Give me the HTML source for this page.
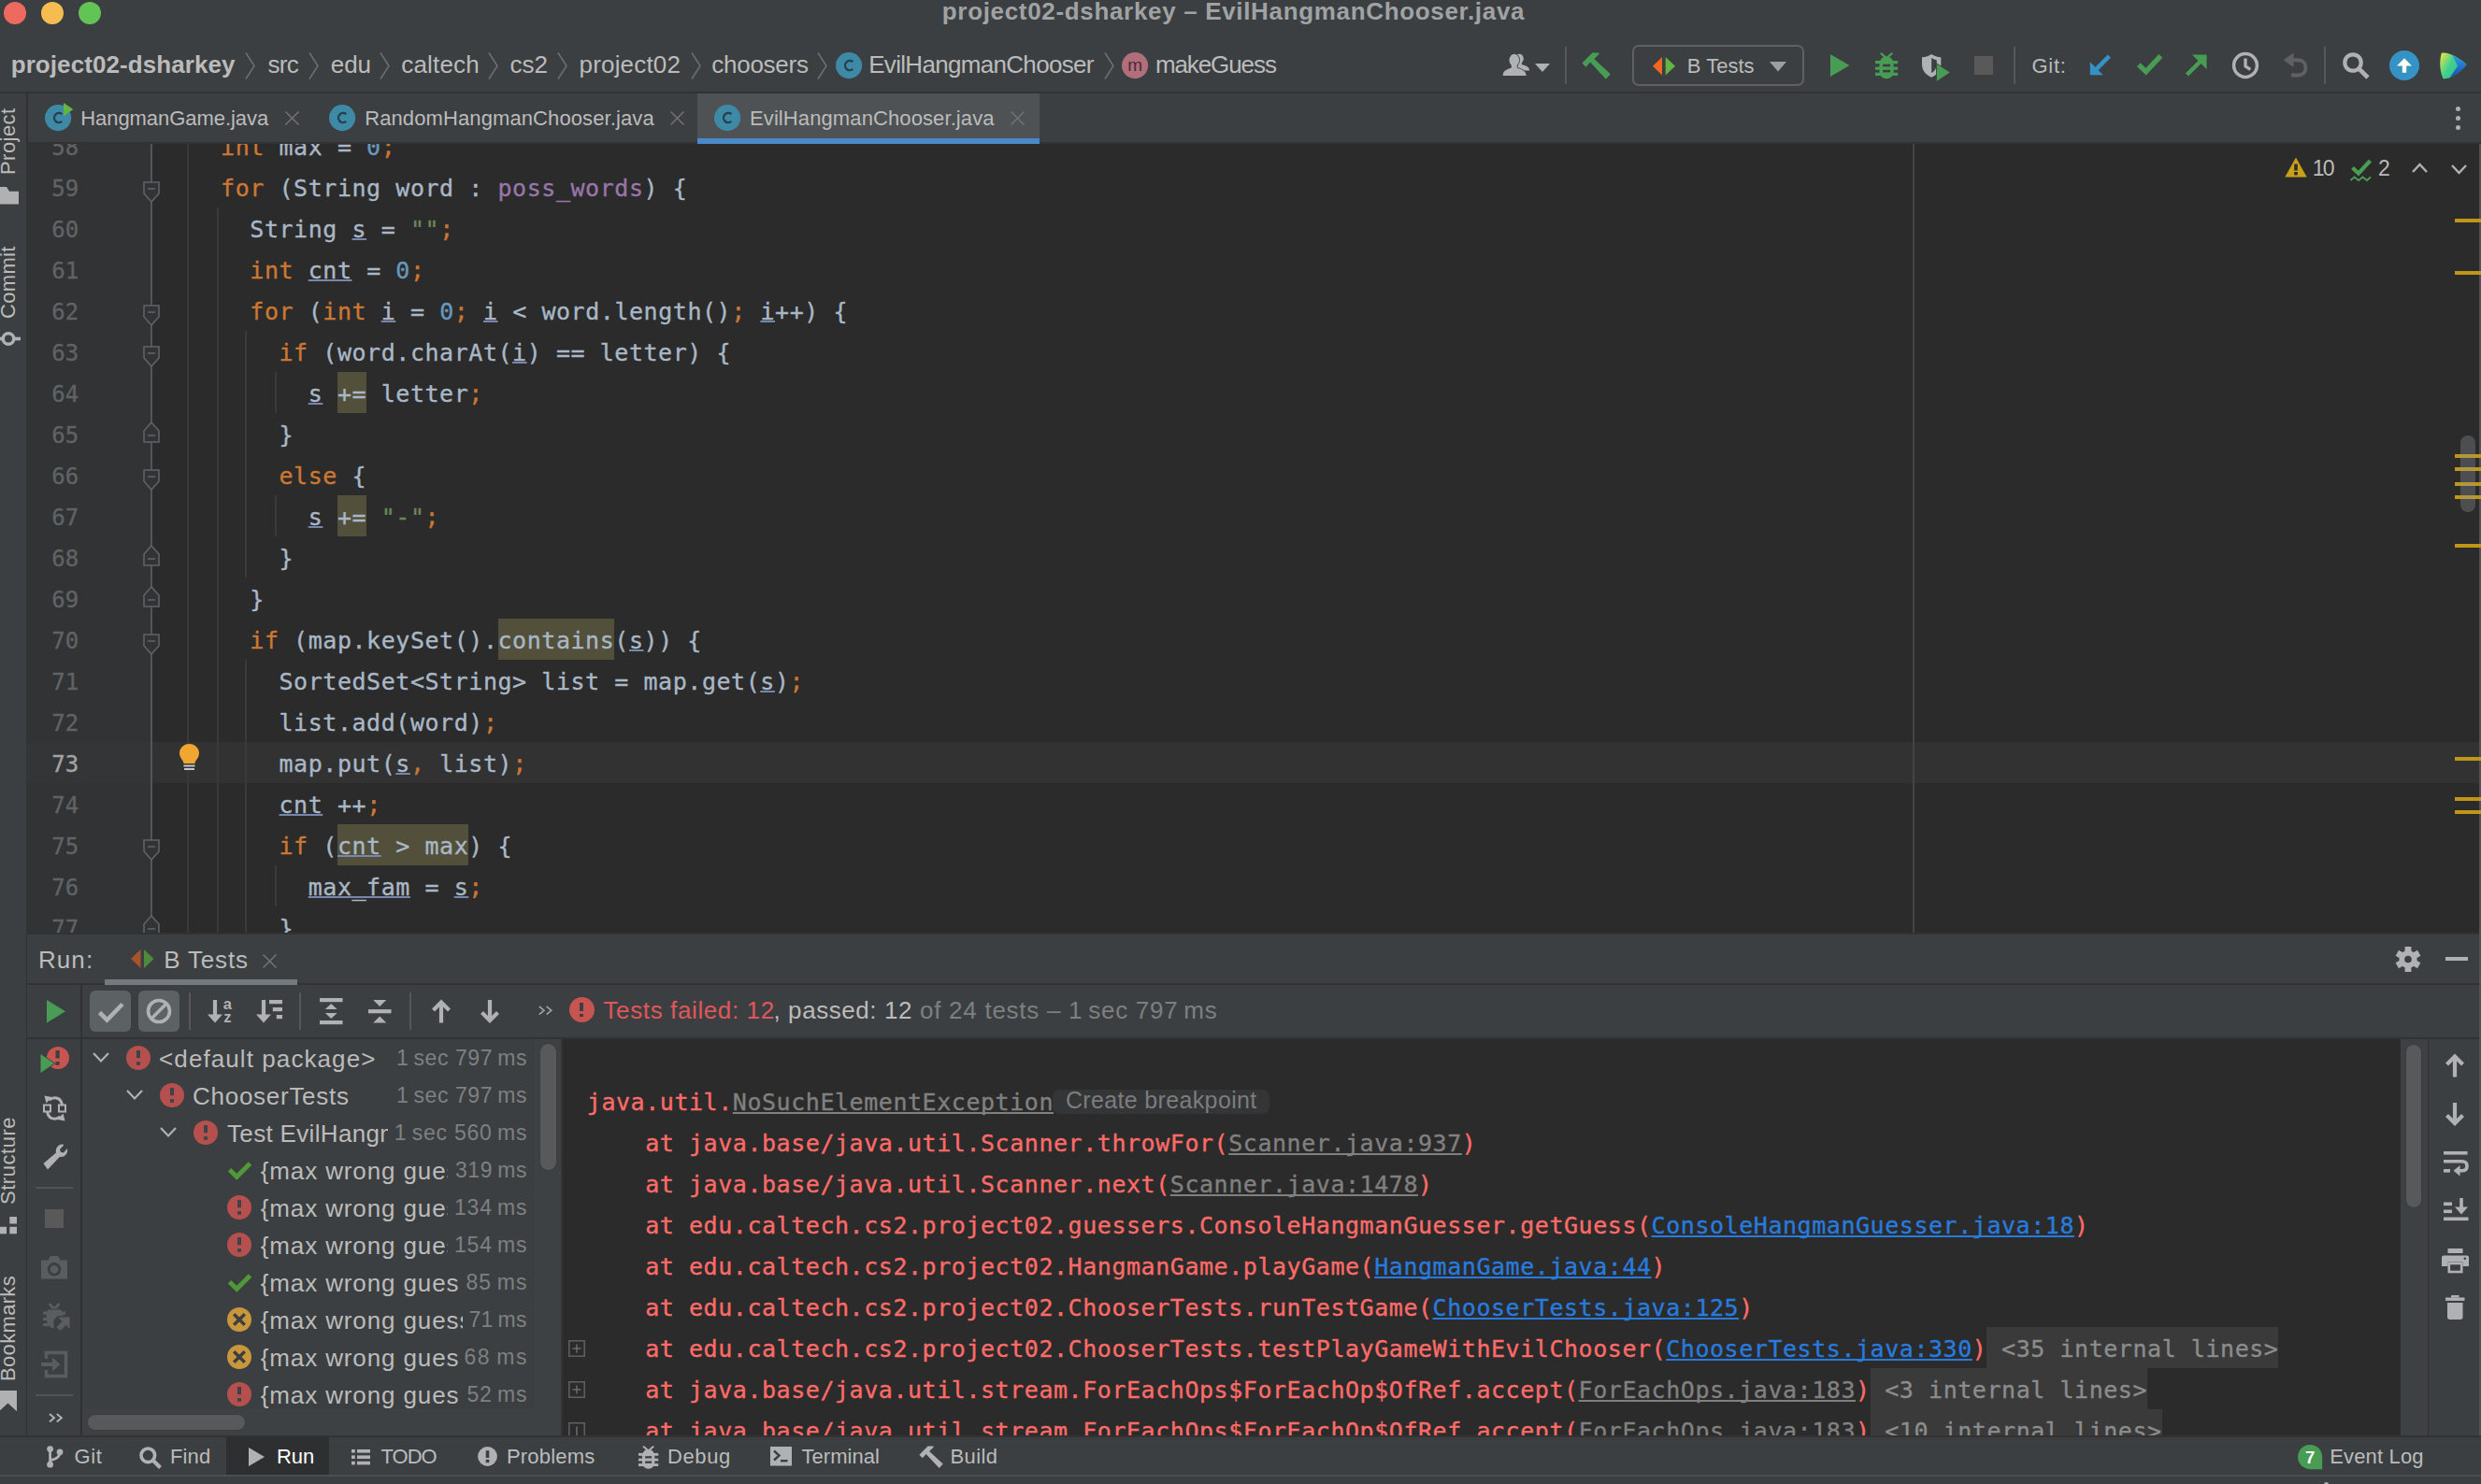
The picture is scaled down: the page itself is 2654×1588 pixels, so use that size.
<!DOCTYPE html>
<html lang="en"><head><meta charset="utf-8"><title>project02-dsharkey – EvilHangmanChooser.java</title>
<style>
html,body{margin:0;padding:0;background:#3c3f41;}
body{width:2654px;height:1588px;overflow:hidden;}
#app{position:relative;width:2654px;height:1588px;overflow:hidden;background:#3c3f41;font-family:'Liberation Sans',Arial,sans-serif;}
#app div,#app span,#app svg,#app pre{position:absolute;white-space:pre;}
#app svg{overflow:visible;}
#app pre{margin:0;}
#app pre span, #app pre b, #app pre i, #app pre u, #app span span{position:static;font:inherit;}
.code{font:25px/44px 'DejaVu Sans Mono','Liberation Mono',monospace;letter-spacing:0.549px;color:#a9b7c6;-webkit-text-stroke:0.35px;}
.k{color:#cc7832}.s{color:#6a8759}.n{color:#6897bb}.f{color:#9876aa}
.u{text-decoration:underline;text-decoration-color:#7687ab;text-decoration-thickness:2px;text-underline-offset:1.2px;text-decoration-skip-ink:none;}
.h{background:#52503a;padding:9px 0 6px 0}
.ln{font:24px/44px 'DejaVu Sans Mono','Liberation Mono',monospace;letter-spacing:0px;color:#606366;text-align:right;-webkit-text-stroke:0.35px;}
.r{color:#ff6b68}.g{color:#808080}.l{color:#287bde}
.ul{text-decoration:underline;text-decoration-thickness:2px;text-underline-offset:2px;text-decoration-skip-ink:none;}
.fold{background:#3a3a3a;color:#8c8c8c;padding:9px 0 6px 0}

</style></head><body>
<div id="app">
<div style="left:28px;top:154px;width:2626px;height:844px;background:#2b2b2b;"></div>
<div style="left:28px;top:154px;width:134px;height:844px;background:#313335;"></div>
<div style="left:162px;top:794px;width:2492px;height:44px;background:#323232;"></div>
<div style="left:28px;top:794px;width:134px;height:44px;background:#333537;"></div>
<div style="left:2046px;top:154px;width:1.5px;height:844px;background:#424445;"></div>
<div style="left:161.3px;top:154px;width:2px;height:844px;background:#535557;"></div>
<div style="left:200.0px;top:154px;width:2px;height:844px;background:#3a3a3a;"></div>
<div style="left:232.0px;top:222px;width:2px;height:776px;background:#3a3a3a;"></div>
<div style="left:262.0px;top:354px;width:2px;height:264px;background:#3a3a3a;"></div>
<div style="left:262.0px;top:706px;width:2px;height:292px;background:#3a3a3a;"></div>
<div style="left:294.0px;top:398px;width:2px;height:44px;background:#3a3a3a;"></div>
<div style="left:294.0px;top:530px;width:2px;height:44px;background:#3a3a3a;"></div>
<div style="left:294.0px;top:926px;width:2px;height:44px;background:#3a3a3a;"></div>
<pre class="code" style="left:236.1px;top:135.5px;height:44px"><span class="k">int</span> max = <span class="n">0</span><span class="k">;</span></pre>
<pre class="ln" style="left:30px;top:136.0px;width:54.2px;color:#606366">58</pre>
<pre class="code" style="left:236.1px;top:179.5px;height:44px"><span class="k">for</span> (String word : <span class="f">poss_words</span>) {</pre>
<pre class="ln" style="left:30px;top:180.0px;width:54.2px;color:#606366">59</pre>
<pre class="code" style="left:267.3px;top:223.5px;height:44px">String <span class="u">s</span> = <span class="s">""</span><span class="k">;</span></pre>
<pre class="ln" style="left:30px;top:224.0px;width:54.2px;color:#606366">60</pre>
<pre class="code" style="left:267.3px;top:267.5px;height:44px"><span class="k">int</span> <span class="u">cnt</span> = <span class="n">0</span><span class="k">;</span></pre>
<pre class="ln" style="left:30px;top:268.0px;width:54.2px;color:#606366">61</pre>
<pre class="code" style="left:267.3px;top:311.5px;height:44px"><span class="k">for</span> (<span class="k">int</span> <span class="u">i</span> = <span class="n">0</span><span class="k">;</span> <span class="u">i</span> &lt; word.length()<span class="k">;</span> <span class="u">i</span>++) {</pre>
<pre class="ln" style="left:30px;top:312.0px;width:54.2px;color:#606366">62</pre>
<pre class="code" style="left:298.5px;top:355.5px;height:44px"><span class="k">if</span> (word.charAt(<span class="u">i</span>) == letter) {</pre>
<pre class="ln" style="left:30px;top:356.0px;width:54.2px;color:#606366">63</pre>
<pre class="code" style="left:329.7px;top:399.5px;height:44px"><span class="u">s</span> <span class="h">+=</span> letter<span class="k">;</span></pre>
<pre class="ln" style="left:30px;top:400.0px;width:54.2px;color:#606366">64</pre>
<pre class="code" style="left:298.5px;top:443.5px;height:44px">}</pre>
<pre class="ln" style="left:30px;top:444.0px;width:54.2px;color:#606366">65</pre>
<pre class="code" style="left:298.5px;top:487.5px;height:44px"><span class="k">else</span> {</pre>
<pre class="ln" style="left:30px;top:488.0px;width:54.2px;color:#606366">66</pre>
<pre class="code" style="left:329.7px;top:531.5px;height:44px"><span class="u">s</span> <span class="h">+=</span> <span class="s">"-"</span><span class="k">;</span></pre>
<pre class="ln" style="left:30px;top:532.0px;width:54.2px;color:#606366">67</pre>
<pre class="code" style="left:298.5px;top:575.5px;height:44px">}</pre>
<pre class="ln" style="left:30px;top:576.0px;width:54.2px;color:#606366">68</pre>
<pre class="code" style="left:267.3px;top:619.5px;height:44px">}</pre>
<pre class="ln" style="left:30px;top:620.0px;width:54.2px;color:#606366">69</pre>
<pre class="code" style="left:267.3px;top:663.5px;height:44px"><span class="k">if</span> (map.keySet().<span class="h">contains</span>(<span class="u">s</span>)) {</pre>
<pre class="ln" style="left:30px;top:664.0px;width:54.2px;color:#606366">70</pre>
<pre class="code" style="left:298.5px;top:707.5px;height:44px">SortedSet&lt;String&gt; list = map.get(<span class="u">s</span>)<span class="k">;</span></pre>
<pre class="ln" style="left:30px;top:708.0px;width:54.2px;color:#606366">71</pre>
<pre class="code" style="left:298.5px;top:751.5px;height:44px">list.add(word)<span class="k">;</span></pre>
<pre class="ln" style="left:30px;top:752.0px;width:54.2px;color:#606366">72</pre>
<pre class="code" style="left:298.5px;top:795.5px;height:44px">map.put(<span class="u">s</span><span class="k">,</span> list)<span class="k">;</span></pre>
<pre class="ln" style="left:30px;top:796.0px;width:54.2px;color:#a4a3a3">73</pre>
<pre class="code" style="left:298.5px;top:839.5px;height:44px"><span class="u">cnt</span> ++<span class="k">;</span></pre>
<pre class="ln" style="left:30px;top:840.0px;width:54.2px;color:#606366">74</pre>
<pre class="code" style="left:298.5px;top:883.5px;height:44px"><span class="k">if</span> (<span class="h"><span class="u">cnt</span> &gt; max</span>) {</pre>
<pre class="ln" style="left:30px;top:884.0px;width:54.2px;color:#606366">75</pre>
<pre class="code" style="left:329.7px;top:927.5px;height:44px"><span class="u">max_fam</span> = <span class="u">s</span><span class="k">;</span></pre>
<pre class="ln" style="left:30px;top:928.0px;width:54.2px;color:#606366">76</pre>
<pre class="code" style="left:298.5px;top:971.5px;height:44px">}</pre>
<pre class="ln" style="left:30px;top:972.0px;width:54.2px;color:#606366">77</pre>
<svg style="left:153px;top:193.5px;" width="18" height="23" viewBox="0 0 18 23"><path d="M1 1 H17 V13 L9 22 L1 13 Z" fill="#313335" stroke="#606366" stroke-width="1.6"/><path d="M5 8 H13" stroke="#606366" stroke-width="1.6"/></svg>
<svg style="left:153px;top:325.5px;" width="18" height="23" viewBox="0 0 18 23"><path d="M1 1 H17 V13 L9 22 L1 13 Z" fill="#313335" stroke="#606366" stroke-width="1.6"/><path d="M5 8 H13" stroke="#606366" stroke-width="1.6"/></svg>
<svg style="left:153px;top:369.5px;" width="18" height="23" viewBox="0 0 18 23"><path d="M1 1 H17 V13 L9 22 L1 13 Z" fill="#313335" stroke="#606366" stroke-width="1.6"/><path d="M5 8 H13" stroke="#606366" stroke-width="1.6"/></svg>
<svg style="left:153px;top:451.3px;" width="18" height="23" viewBox="0 0 18 23"><path d="M1 22 H17 V10 L9 1 L1 10 Z" fill="#313335" stroke="#606366" stroke-width="1.6"/><path d="M5 15 H13" stroke="#606366" stroke-width="1.6"/></svg>
<svg style="left:153px;top:501.5px;" width="18" height="23" viewBox="0 0 18 23"><path d="M1 1 H17 V13 L9 22 L1 13 Z" fill="#313335" stroke="#606366" stroke-width="1.6"/><path d="M5 8 H13" stroke="#606366" stroke-width="1.6"/></svg>
<svg style="left:153px;top:583.3px;" width="18" height="23" viewBox="0 0 18 23"><path d="M1 22 H17 V10 L9 1 L1 10 Z" fill="#313335" stroke="#606366" stroke-width="1.6"/><path d="M5 15 H13" stroke="#606366" stroke-width="1.6"/></svg>
<svg style="left:153px;top:627.3px;" width="18" height="23" viewBox="0 0 18 23"><path d="M1 22 H17 V10 L9 1 L1 10 Z" fill="#313335" stroke="#606366" stroke-width="1.6"/><path d="M5 15 H13" stroke="#606366" stroke-width="1.6"/></svg>
<svg style="left:153px;top:677.5px;" width="18" height="23" viewBox="0 0 18 23"><path d="M1 1 H17 V13 L9 22 L1 13 Z" fill="#313335" stroke="#606366" stroke-width="1.6"/><path d="M5 8 H13" stroke="#606366" stroke-width="1.6"/></svg>
<svg style="left:153px;top:897.5px;" width="18" height="23" viewBox="0 0 18 23"><path d="M1 1 H17 V13 L9 22 L1 13 Z" fill="#313335" stroke="#606366" stroke-width="1.6"/><path d="M5 8 H13" stroke="#606366" stroke-width="1.6"/></svg>
<svg style="left:153px;top:979.3px;" width="18" height="23" viewBox="0 0 18 23"><path d="M1 22 H17 V10 L9 1 L1 10 Z" fill="#313335" stroke="#606366" stroke-width="1.6"/><path d="M5 15 H13" stroke="#606366" stroke-width="1.6"/></svg>
<div style="left:0px;top:0px;width:2654px;height:98px;background:#3c3f41;"></div>
<div style="left:0px;top:98px;width:2654px;height:2px;background:#323232;"></div>
<div style="left:0px;top:100px;width:2654px;height:52px;background:#3c3f41;"></div>
<div style="left:0px;top:152px;width:2654px;height:2px;background:#323232;"></div>
<div style="left:0px;top:100px;width:28px;height:1488px;background:#3c3f41;"></div>
<div style="left:28px;top:998px;width:2px;height:539px;background:#2f3133;"></div>
<div style="left:28px;top:100px;width:2px;height:52px;background:#2f3133;"></div>
<div style="left:4px;top:1.5px;width:24px;height:24px;border-radius:50%;background:#ee6a5f"></div>
<div style="left:44px;top:1.5px;width:24px;height:24px;border-radius:50%;background:#f5bd4f"></div>
<div style="left:84px;top:1.5px;width:24px;height:24px;border-radius:50%;background:#61c454"></div>
<span style="left:1007.80px;top:-2.60px;font:700 26px/30px 'Liberation Sans', Arial, sans-serif;color:#a0a2a3;letter-spacing:0.669px;">project02-dsharkey – EvilHangmanChooser.java</span>
<span style="left:11.70px;top:53.50px;font:700 26px/30px 'Liberation Sans', Arial, sans-serif;color:#bbbbbb;letter-spacing:0.077px;">project02-dsharkey</span>
<span style="left:286.40px;top:53.50px;font:400 26px/30px 'Liberation Sans', Arial, sans-serif;color:#bbbbbb;letter-spacing:-0.679px;">src</span>
<span style="left:353.70px;top:53.50px;font:400 26px/30px 'Liberation Sans', Arial, sans-serif;color:#bbbbbb;letter-spacing:-0.010px;">edu</span>
<span style="left:429.30px;top:53.50px;font:400 26px/30px 'Liberation Sans', Arial, sans-serif;color:#bbbbbb;letter-spacing:0.180px;">caltech</span>
<span style="left:545.60px;top:53.50px;font:400 26px/30px 'Liberation Sans', Arial, sans-serif;color:#bbbbbb;letter-spacing:-0.050px;">cs2</span>
<span style="left:619.60px;top:53.50px;font:400 26px/30px 'Liberation Sans', Arial, sans-serif;color:#bbbbbb;letter-spacing:0.163px;">project02</span>
<span style="left:761.20px;top:53.50px;font:400 26px/30px 'Liberation Sans', Arial, sans-serif;color:#bbbbbb;letter-spacing:-0.243px;">choosers</span>
<span style="left:929.20px;top:53.50px;font:400 26px/30px 'Liberation Sans', Arial, sans-serif;color:#bbbbbb;letter-spacing:-0.685px;">EvilHangmanChooser</span>
<span style="left:1235.90px;top:53.50px;font:400 26px/30px 'Liberation Sans', Arial, sans-serif;color:#bbbbbb;letter-spacing:-1.090px;">makeGuess</span>
<svg style="left:262px;top:56px;" width="11" height="29" viewBox="0 0 11 29"><path d="M1 0.5 L10 14.5 L1 28.5" fill="none" stroke="#6b6e70" stroke-width="1.6"/></svg>
<svg style="left:330px;top:56px;" width="11" height="29" viewBox="0 0 11 29"><path d="M1 0.5 L10 14.5 L1 28.5" fill="none" stroke="#6b6e70" stroke-width="1.6"/></svg>
<svg style="left:406px;top:56px;" width="11" height="29" viewBox="0 0 11 29"><path d="M1 0.5 L10 14.5 L1 28.5" fill="none" stroke="#6b6e70" stroke-width="1.6"/></svg>
<svg style="left:522px;top:56px;" width="11" height="29" viewBox="0 0 11 29"><path d="M1 0.5 L10 14.5 L1 28.5" fill="none" stroke="#6b6e70" stroke-width="1.6"/></svg>
<svg style="left:596px;top:56px;" width="11" height="29" viewBox="0 0 11 29"><path d="M1 0.5 L10 14.5 L1 28.5" fill="none" stroke="#6b6e70" stroke-width="1.6"/></svg>
<svg style="left:738.5px;top:56px;" width="11" height="29" viewBox="0 0 11 29"><path d="M1 0.5 L10 14.5 L1 28.5" fill="none" stroke="#6b6e70" stroke-width="1.6"/></svg>
<svg style="left:874px;top:56px;" width="11" height="29" viewBox="0 0 11 29"><path d="M1 0.5 L10 14.5 L1 28.5" fill="none" stroke="#6b6e70" stroke-width="1.6"/></svg>
<svg style="left:1180.5px;top:56px;" width="11" height="29" viewBox="0 0 11 29"><path d="M1 0.5 L10 14.5 L1 28.5" fill="none" stroke="#6b6e70" stroke-width="1.6"/></svg>
<svg style="left:893.9px;top:55.800000000000004px;" width="28.2" height="28.2" viewBox="0 0 28.2 28.2"><circle cx="14.1" cy="14.1" r="14.1" fill="#3e89a5"/><path d="M18.40 10.20 A5.1 5.1 0 1 0 18.40 18.00" fill="none" stroke="#25414d" stroke-width="2.3"/></svg>
<svg style="left:1199.9px;top:55.85px;" width="28.2" height="28.2" viewBox="0 0 28.2 28.2"><circle cx="14.1" cy="14.1" r="14.1" fill="#b16e7b"/><text x="14.1" y="20.2" text-anchor="middle" font-family="Liberation Sans, Arial, sans-serif" font-size="19" fill="#4a2a32">m</text></svg>
<div style="left:745.8px;top:100px;width:366.2px;height:48px;background:#4e5254;"></div>
<div style="left:745.8px;top:147.5px;width:366.2px;height:6px;background:#4a88c7;"></div>
<svg style="left:47.9px;top:111.80000000000001px;" width="28.2" height="28.2" viewBox="0 0 28.2 28.2"><circle cx="14.1" cy="14.1" r="14.1" fill="#3e89a5"/><path d="M18.40 10.20 A5.1 5.1 0 1 0 18.40 18.00" fill="none" stroke="#25414d" stroke-width="2.3"/></svg>
<svg style="left:67.8px;top:109.9px;" width="10.4" height="14.2" viewBox="0 0 10.4 14.2"><path d="M0 0 L10.4 7.1 L0 14.2 Z" fill="#62b543"/></svg>
<span style="left:86.20px;top:113.70px;font:400 22px/25px 'Liberation Sans', Arial, sans-serif;color:#bbbbbb;letter-spacing:-0.049px;">HangmanGame.java</span>
<svg style="left:351.7px;top:111.80000000000001px;" width="28.2" height="28.2" viewBox="0 0 28.2 28.2"><circle cx="14.1" cy="14.1" r="14.1" fill="#3e89a5"/><path d="M18.40 10.20 A5.1 5.1 0 1 0 18.40 18.00" fill="none" stroke="#25414d" stroke-width="2.3"/></svg>
<span style="left:390.20px;top:113.70px;font:400 22px/25px 'Liberation Sans', Arial, sans-serif;color:#bbbbbb;letter-spacing:0.103px;">RandomHangmanChooser.java</span>
<svg style="left:764.1px;top:111.80000000000001px;" width="28.2" height="28.2" viewBox="0 0 28.2 28.2"><circle cx="14.1" cy="14.1" r="14.1" fill="#3e89a5"/><path d="M18.40 10.20 A5.1 5.1 0 1 0 18.40 18.00" fill="none" stroke="#25414d" stroke-width="2.3"/></svg>
<span style="left:802.00px;top:113.70px;font:400 22px/25px 'Liberation Sans', Arial, sans-serif;color:#bbbbbb;letter-spacing:0.104px;">EvilHangmanChooser.java</span>
<svg style="left:304.9px;top:118.7px;" width="15" height="15" viewBox="0 0 15 15"><path d="M0.5 0.5 L14.5 14.5 M14.5 0.5 L0.5 14.5" stroke="#6e7073" stroke-width="1.7" fill="none"/></svg>
<svg style="left:716.8px;top:118.7px;" width="15" height="15" viewBox="0 0 15 15"><path d="M0.5 0.5 L14.5 14.5 M14.5 0.5 L0.5 14.5" stroke="#6e7073" stroke-width="1.7" fill="none"/></svg>
<svg style="left:1080.8px;top:118.7px;" width="15" height="15" viewBox="0 0 15 15"><path d="M0.5 0.5 L14.5 14.5 M14.5 0.5 L0.5 14.5" stroke="#6e7073" stroke-width="1.7" fill="none"/></svg>
<div style="left:2627px;top:113.5px;width:5px;height:5px;border-radius:50%;background:#afb1b3"></div>
<div style="left:2627px;top:123.8px;width:5px;height:5px;border-radius:50%;background:#afb1b3"></div>
<div style="left:2627px;top:134.1px;width:5px;height:5px;border-radius:50%;background:#afb1b3"></div>
<div style="left:29px;top:998px;width:2625px;height:2px;background:#323232;"></div>
<div style="left:29px;top:1000px;width:2625px;height:537px;background:#3c3f41;"></div>
<div style="left:29px;top:1052px;width:2625px;height:2px;background:#323232;"></div>
<div style="left:29px;top:1110px;width:2625px;height:2px;background:#323232;"></div>
<div style="left:86px;top:1054px;width:2px;height:483px;background:#2f3133;"></div>
<div style="left:602px;top:1112px;width:1966px;height:424px;background:#2b2b2b;"></div>
<div style="left:600px;top:1112px;width:2px;height:424px;background:#313335;"></div>
<div style="left:2568px;top:1112px;width:29px;height:424px;background:#3e4143;"></div>
<div style="left:2596.5px;top:1112px;width:1.5px;height:424px;background:#323232;"></div>
<div style="left:2573px;top:1116.5px;width:18px;height:176.5px;border-radius:9px;background:#58595b;border:1.3px solid #3a3c3e;box-sizing:border-box"></div>
<div style="left:572px;top:1112px;width:28px;height:396px;background:#3e4143;"></div>
<div style="left:88px;top:1508px;width:512px;height:28px;background:#3e4143;"></div>
<div style="left:576.5px;top:1116px;width:19px;height:137px;border-radius:9.5px;background:#58595b;border:1.3px solid #3a3c3e;box-sizing:border-box"></div>
<div style="left:93px;top:1513.3px;width:170px;height:17.5px;border-radius:9px;background:#58595b;border:1.3px solid #3a3c3e;box-sizing:border-box"></div>
<div style="left:0px;top:1536px;width:2654px;height:1.5px;background:#323232;"></div>
<div style="left:0px;top:1537.5px;width:2654px;height:50.5px;background:#3c3f41;"></div>
<div style="left:0px;top:1578px;width:2654px;height:1.5px;background:#4b4e50;"></div>
<div style="left:2652px;top:154px;width:2px;height:1382px;background:#4f5254;"></div>
<span style="left:41.00px;top:1012.00px;font:400 26px/30px 'Liberation Sans', Arial, sans-serif;color:#bbbbbb;letter-spacing:1.068px;">Run:</span>
<span style="left:175.20px;top:1012.00px;font:400 26px/30px 'Liberation Sans', Arial, sans-serif;color:#bbbbbb;letter-spacing:0.842px;">B Tests</span>
<svg style="left:140px;top:1016px;" width="25" height="20" viewBox="0 0 25 20"><path d="M10.5 0 V20 L0 10 Z" fill="#a8532d"/><path d="M14 0 V20 L24.5 10 Z" fill="#4d8a3c"/></svg>
<svg style="left:280.5px;top:1021px;" width="15" height="15" viewBox="0 0 15 15"><path d="M0.5 0.5 L14.5 14.5 M14.5 0.5 L0.5 14.5" stroke="#6e7073" stroke-width="1.7" fill="none"/></svg>
<div style="left:112px;top:1048px;width:206px;height:5.5px;background:#747a80;"></div>
<div style="left:608.5px;top:1066.8px;width:27px;height:27px;border-radius:50%;background:#c75450"></div>
<div style="left:620.3px;top:1072.5px;width:3.4px;height:9px;background:#3c3f41;"></div>
<div style="left:620.3px;top:1084.5px;width:3.4px;height:3.6px;background:#3c3f41;"></div>
<span style="left:645.50px;top:1066.00px;font:400 26px/30px 'Liberation Sans', Arial, sans-serif;color:#e0575a;letter-spacing:0.615px;">Tests failed: 12</span>
<span style="left:827.50px;top:1066.00px;font:400 26px/30px 'Liberation Sans', Arial, sans-serif;color:#bbbbbb;letter-spacing:0.573px;">, passed: 12</span>
<span style="left:984.00px;top:1066.00px;font:400 26px/30px 'Liberation Sans', Arial, sans-serif;color:#7d7f80;letter-spacing:0.730px;">of 24 tests – 1 sec 797 ms</span>
<svg style="left:98.6px;top:1126px;" width="18" height="11" viewBox="0 0 18 11"><path d="M1 1 L9 9.5 L17 1" fill="none" stroke="#afb1b3" stroke-width="2.2"/></svg>
<svg style="left:135.2px;top:1119px;" width="26" height="26" viewBox="0 0 26 26"><circle cx="13" cy="13" r="13" fill="#b5504f"/><rect x="11" y="5" width="4" height="8.2" fill="#3c4448"/><rect x="11" y="17.1" width="4" height="3.7" fill="#3c4448"/></svg>
<span style="left:170.10px;top:1118.30px;font:400 26px/30px 'Liberation Sans', Arial, sans-serif;color:#bbbbbb;letter-spacing:1.083px;">&lt;default package&gt;</span>
<span style="left:424.00px;top:1119.40px;font:400 23px/26px 'Liberation Sans', Arial, sans-serif;color:#7e8081;letter-spacing:0.571px;">1 sec 797 ms</span>
<svg style="left:134.6px;top:1166px;" width="18" height="11" viewBox="0 0 18 11"><path d="M1 1 L9 9.5 L17 1" fill="none" stroke="#afb1b3" stroke-width="2.2"/></svg>
<svg style="left:171.2px;top:1159px;" width="26" height="26" viewBox="0 0 26 26"><circle cx="13" cy="13" r="13" fill="#b5504f"/><rect x="11" y="5" width="4" height="8.2" fill="#3c4448"/><rect x="11" y="17.1" width="4" height="3.7" fill="#3c4448"/></svg>
<span style="left:206.00px;top:1158.30px;font:400 26px/30px 'Liberation Sans', Arial, sans-serif;color:#bbbbbb;letter-spacing:0.731px;">ChooserTests</span>
<span style="left:424.00px;top:1159.40px;font:400 23px/26px 'Liberation Sans', Arial, sans-serif;color:#7e8081;letter-spacing:0.571px;">1 sec 797 ms</span>
<svg style="left:170.6px;top:1206px;" width="18" height="11" viewBox="0 0 18 11"><path d="M1 1 L9 9.5 L17 1" fill="none" stroke="#afb1b3" stroke-width="2.2"/></svg>
<svg style="left:207.2px;top:1199px;" width="26" height="26" viewBox="0 0 26 26"><circle cx="13" cy="13" r="13" fill="#b5504f"/><rect x="11" y="5" width="4" height="8.2" fill="#3c4448"/><rect x="11" y="17.1" width="4" height="3.7" fill="#3c4448"/></svg>
<span style="left:243.00px;top:1198.30px;font:400 26px/30px 'Liberation Sans', Arial, sans-serif;color:#bbbbbb;letter-spacing:0.333px;width:172.20px;overflow:hidden;">Test EvilHangman</span>
<span style="left:421.70px;top:1199.40px;font:400 23px/26px 'Liberation Sans', Arial, sans-serif;color:#7e8081;letter-spacing:0.780px;">1 sec 560 ms</span>
<svg style="left:243.7px;top:1242.5px;" width="25" height="19" viewBox="0 0 25 19"><path d="M1.500 8.800 L9.300 16.200 L23.500 2" fill="none" stroke="#4f9a36" stroke-width="5"/></svg>
<span style="left:278.70px;top:1238.30px;font:400 26px/30px 'Liberation Sans', Arial, sans-serif;color:#bbbbbb;letter-spacing:0.883px;width:200.80px;overflow:hidden;">{max wrong guesses</span>
<span style="left:487.00px;top:1239.40px;font:400 23px/26px 'Liberation Sans', Arial, sans-serif;color:#7e8081;letter-spacing:0.572px;">319 ms</span>
<svg style="left:243.2px;top:1279px;" width="26" height="26" viewBox="0 0 26 26"><circle cx="13" cy="13" r="13" fill="#b5504f"/><rect x="11" y="5" width="4" height="8.2" fill="#3c4448"/><rect x="11" y="17.1" width="4" height="3.7" fill="#3c4448"/></svg>
<span style="left:278.70px;top:1278.30px;font:400 26px/30px 'Liberation Sans', Arial, sans-serif;color:#bbbbbb;letter-spacing:0.883px;width:200.80px;overflow:hidden;">{max wrong guesses</span>
<span style="left:486.00px;top:1279.40px;font:400 23px/26px 'Liberation Sans', Arial, sans-serif;color:#7e8081;letter-spacing:0.772px;">134 ms</span>
<svg style="left:243.2px;top:1319px;" width="26" height="26" viewBox="0 0 26 26"><circle cx="13" cy="13" r="13" fill="#b5504f"/><rect x="11" y="5" width="4" height="8.2" fill="#3c4448"/><rect x="11" y="17.1" width="4" height="3.7" fill="#3c4448"/></svg>
<span style="left:278.70px;top:1318.30px;font:400 26px/30px 'Liberation Sans', Arial, sans-serif;color:#bbbbbb;letter-spacing:0.883px;width:200.80px;overflow:hidden;">{max wrong guesses</span>
<span style="left:486.00px;top:1319.40px;font:400 23px/26px 'Liberation Sans', Arial, sans-serif;color:#7e8081;letter-spacing:0.772px;">154 ms</span>
<svg style="left:243.7px;top:1362.5px;" width="25" height="19" viewBox="0 0 25 19"><path d="M1.500 8.800 L9.300 16.200 L23.500 2" fill="none" stroke="#4f9a36" stroke-width="5"/></svg>
<span style="left:278.70px;top:1358.30px;font:400 26px/30px 'Liberation Sans', Arial, sans-serif;color:#bbbbbb;letter-spacing:0.883px;width:213.30px;overflow:hidden;">{max wrong guesses</span>
<span style="left:498.50px;top:1359.40px;font:400 23px/26px 'Liberation Sans', Arial, sans-serif;color:#7e8081;letter-spacing:1.038px;">85 ms</span>
<svg style="left:243.2px;top:1399px;" width="26" height="26" viewBox="0 0 26 26"><circle cx="13" cy="13" r="13" fill="#c8973c"/><path d="M7.2 7.2 L18.8 18.8 M18.8 7.2 L7.2 18.8" stroke="#3c3f41" stroke-width="3.4"/></svg>
<span style="left:278.70px;top:1398.30px;font:400 26px/30px 'Liberation Sans', Arial, sans-serif;color:#bbbbbb;letter-spacing:0.883px;width:216.30px;overflow:hidden;">{max wrong guesses</span>
<span style="left:501.50px;top:1399.40px;font:400 23px/26px 'Liberation Sans', Arial, sans-serif;color:#7e8081;letter-spacing:0.288px;">71 ms</span>
<svg style="left:243.2px;top:1439px;" width="26" height="26" viewBox="0 0 26 26"><circle cx="13" cy="13" r="13" fill="#c8973c"/><path d="M7.2 7.2 L18.8 18.8 M18.8 7.2 L7.2 18.8" stroke="#3c3f41" stroke-width="3.4"/></svg>
<span style="left:278.70px;top:1438.30px;font:400 26px/30px 'Liberation Sans', Arial, sans-serif;color:#bbbbbb;letter-spacing:0.883px;width:211.30px;overflow:hidden;">{max wrong guesses</span>
<span style="left:496.50px;top:1439.40px;font:400 23px/26px 'Liberation Sans', Arial, sans-serif;color:#7e8081;letter-spacing:1.538px;">68 ms</span>
<svg style="left:243.2px;top:1479px;" width="26" height="26" viewBox="0 0 26 26"><circle cx="13" cy="13" r="13" fill="#b5504f"/><rect x="11" y="5" width="4" height="8.2" fill="#3c4448"/><rect x="11" y="17.1" width="4" height="3.7" fill="#3c4448"/></svg>
<span style="left:278.70px;top:1478.30px;font:400 26px/30px 'Liberation Sans', Arial, sans-serif;color:#bbbbbb;letter-spacing:0.883px;width:213.30px;overflow:hidden;">{max wrong guesses</span>
<span style="left:499.50px;top:1479.40px;font:400 23px/26px 'Liberation Sans', Arial, sans-serif;color:#7e8081;letter-spacing:0.788px;">52 ms</span>
<div style="left:242px;top:1537.5px;width:110px;height:40.5px;background:#2d2f30;"></div>
<span style="left:79.50px;top:1545.70px;font:400 22px/25px 'Liberation Sans', Arial, sans-serif;color:#bbbbbb;letter-spacing:0.600px;">Git</span>
<span style="left:182.00px;top:1545.70px;font:400 22px/25px 'Liberation Sans', Arial, sans-serif;color:#bbbbbb;letter-spacing:0.146px;">Find</span>
<span style="left:296.00px;top:1545.70px;font:400 22px/25px 'Liberation Sans', Arial, sans-serif;color:#ffffff;letter-spacing:-0.062px;">Run</span>
<span style="left:407.50px;top:1545.70px;font:400 22px/25px 'Liberation Sans', Arial, sans-serif;color:#bbbbbb;letter-spacing:-1.014px;">TODO</span>
<span style="left:542.00px;top:1545.70px;font:400 22px/25px 'Liberation Sans', Arial, sans-serif;color:#bbbbbb;letter-spacing:0.183px;">Problems</span>
<span style="left:714.00px;top:1545.70px;font:400 22px/25px 'Liberation Sans', Arial, sans-serif;color:#bbbbbb;letter-spacing:0.602px;">Debug</span>
<span style="left:857.50px;top:1545.70px;font:400 22px/25px 'Liberation Sans', Arial, sans-serif;color:#bbbbbb;letter-spacing:0.036px;">Terminal</span>
<span style="left:1016.50px;top:1545.70px;font:400 22px/25px 'Liberation Sans', Arial, sans-serif;color:#bbbbbb;letter-spacing:0.379px;">Build</span>
<span style="left:2492.20px;top:1545.70px;font:400 22px/25px 'Liberation Sans', Arial, sans-serif;color:#bbbbbb;letter-spacing:0.158px;">Event Log</span>
<div style="left:600px;top:1112px;width:1968px;height:424px;overflow:hidden">
<pre class="code" style="left:27.8px;top:45.5px;height:44px"><span class="r">java.util.</span><span class="g ul">NoSuchElementException</span></pre>
<pre class="code" style="left:90.2px;top:89.5px;height:44px"><span class="r">at java.base/java.util.Scanner.throwFor(</span><span class="g ul">Scanner.java:937</span><span class="r">)</span></pre>
<pre class="code" style="left:90.2px;top:133.5px;height:44px"><span class="r">at java.base/java.util.Scanner.next(</span><span class="g ul">Scanner.java:1478</span><span class="r">)</span></pre>
<pre class="code" style="left:90.2px;top:177.5px;height:44px"><span class="r">at edu.caltech.cs2.project02.guessers.ConsoleHangmanGuesser.getGuess(</span><span class="l ul">ConsoleHangmanGuesser.java:18</span><span class="r">)</span></pre>
<pre class="code" style="left:90.2px;top:221.5px;height:44px"><span class="r">at edu.caltech.cs2.project02.HangmanGame.playGame(</span><span class="l ul">HangmanGame.java:44</span><span class="r">)</span></pre>
<pre class="code" style="left:90.2px;top:265.5px;height:44px"><span class="r">at edu.caltech.cs2.project02.ChooserTests.runTestGame(</span><span class="l ul">ChooserTests.java:125</span><span class="r">)</span></pre>
<pre class="code" style="left:90.2px;top:309.5px;height:44px"><span class="r">at edu.caltech.cs2.project02.ChooserTests.testPlayGameWithEvilChooser(</span><span class="l ul">ChooserTests.java:330</span><span class="r">)</span><span class="fold"> &lt;35 internal lines&gt;</span></pre>
<pre class="code" style="left:90.2px;top:353.5px;height:44px"><span class="r">at java.base/java.util.stream.ForEachOps$ForEachOp$OfRef.accept(</span><span class="g ul">ForEachOps.java:183</span><span class="r">)</span><span class="fold"> &lt;3 internal lines&gt;</span></pre>
<pre class="code" style="left:90.2px;top:397.5px;height:44px"><span class="r">at java.base/java.util.stream.ForEachOps$ForEachOp$OfRef.accept(</span><span class="g ul">ForEachOps.java:183</span><span class="r">)</span><span class="fold"> &lt;10 internal lines&gt;</span></pre>
</div>
<div style="left:1126px;top:1165.7px;width:232px;height:26.3px;border-radius:8px;background:#343536"></div>
<span style="left:1139.90px;top:1163.00px;font:400 25px/28px 'Liberation Sans', Arial, sans-serif;color:#7b7d7e;letter-spacing:0.351px;">Create breakpoint</span>
<svg style="left:1607px;top:57px;" width="30" height="25" viewBox="0 0 30 25"><g fill="#afb1b3" transform="translate(7.600,0.200) scale(0.840,0.760)"><ellipse cx="12.800" cy="7.300" rx="5.300" ry="6.500"/><path d="M0.700 24 C0.700 19 4.500 17.400 9.800 15.600 V11.500 H15.800 V15.600 C21.100 17.400 25.600 19 25.600 24 Z"/></g><g fill="#3c3f41" stroke="#3c3f41" stroke-width="1.600"><ellipse cx="12.800" cy="7.300" rx="5.300" ry="6.500"/><path d="M0.700 24 C0.700 19 4.500 17.400 9.800 15.600 V11.500 H15.800 V15.600 C21.100 17.400 25.600 19 25.600 24 Z"/></g><g fill="#afb1b3"><ellipse cx="12.800" cy="7.300" rx="5.300" ry="6.500"/><path d="M0.700 24 C0.700 19 4.500 17.400 9.800 15.600 V11.500 H15.800 V15.600 C21.100 17.400 25.600 19 25.600 24 Z"/></g></svg>
<svg style="left:1642px;top:67.5px;" width="16" height="9" viewBox="0 0 16 9"><path d="M0 0 H16 L8 9 Z" fill="#afb1b3"/></svg>
<div style="left:1674px;top:50px;width:1.5px;height:40px;background:#555759;"></div>
<svg style="left:1691.5px;top:55.5px;" width="31" height="29" viewBox="0 0 31 29"><path d="M11.400 0.600 H18.500 V2.100 L13.300 7.100 L30.700 23.200 L25.900 28.700 L9.100 10.600 L4.600 15.800 L0.400 11.600 Z" fill="#499c54"/></svg>
<div style="left:1746px;top:48px;width:184px;height:44px;border:2px solid #5e6062;border-radius:7px;box-sizing:border-box"></div>
<svg style="left:1768px;top:60.5px;" width="25" height="19.5" viewBox="0 0 25 19.5"><path d="M10 0 V19.5 L0 9.75 Z" fill="#f26522"/><path d="M13.7 0 V19.5 L24 9.75 Z" fill="#62b543"/></svg>
<span style="left:1804.70px;top:57.90px;font:400 22px/25px 'Liberation Sans', Arial, sans-serif;color:#bbbbbb;letter-spacing:0.028px;">B Tests</span>
<svg style="left:1893.3px;top:66px;" width="17.8" height="10.5" viewBox="0 0 17.8 10.5"><path d="M0 0 H18 L9 10.500 Z" fill="#9da0a3"/></svg>
<svg style="left:1957.5px;top:58px;" width="20.5" height="24" viewBox="0 0 20.5 24"><path d="M0 0 L20.500 12 L0 24 Z" fill="#499c54"/></svg>
<svg style="left:2005.9px;top:56px;" width="24.2" height="28.2" viewBox="0 0 24.2 28.2"><g fill="#499c54"><path d="M5 1.4 L6.700 0 L12.100 4.700 L17.500 0 L19.200 1.400 L13.600 6.600 H10.600 Z"/><path d="M12.100 4.600 C17 4.600 19.700 8.500 19.700 13.500 V20 C19.700 25 16.600 28.200 12.100 28.200 C7.600 28.200 4.500 25 4.500 20 V13.500 C4.500 8.500 7.200 4.600 12.100 4.600 Z"/><rect x="0" y="9" width="24.200" height="3.200"/><rect x="0" y="15.600" width="24.200" height="3.100"/><rect x="0" y="21.700" width="24.200" height="3.300"/></g><rect x="8.100" y="12.700" width="8" height="2.600" fill="#3c3f41"/><rect x="8.100" y="18.800" width="8" height="2.600" fill="#3c3f41"/></svg>
<svg style="left:2056px;top:57.5px;" width="30" height="29" viewBox="0 0 30 29"><path d="M0 3.200 C4 3.200 7.500 2 10.200 0 C13 2 16.500 3.200 20.300 3.200 V11 C20.300 18 15.500 22.500 10.200 24.700 C4.800 22.500 0 18 0 11 Z" fill="#afb1b3"/><path d="M10.200 4 C12 5.200 13.800 6 15.700 6.300 V11 C15.700 15 13.500 18.300 10.200 20.200 Z" fill="#3c3f41"/><path d="M15 9 L31 19.500 L15 30 Z" fill="#3c3f41"/><path d="M15.800 10.500 L29.800 19.600 L15.800 28.700 Z" fill="#499c54"/></svg>
<div style="left:2112px;top:60px;width:20px;height:20px;background:#595959;"></div>
<div style="left:2154px;top:50px;width:1.5px;height:40px;background:#555759;"></div>
<span style="left:2173.50px;top:58.10px;font:400 22px/25px 'Liberation Sans', Arial, sans-serif;color:#bbbbbb;letter-spacing:0.696px;">Git:</span>
<svg style="left:2235px;top:58px;" width="24" height="23" viewBox="0 0 24 23"><path d="M21.300 2.200 L5 18.500" stroke="#3592c4" stroke-width="4.600" fill="none"/><path d="M0.800 8.300 V22.300 H14.800 Z" fill="#3592c4"/></svg>
<svg style="left:2286px;top:58px;" width="27" height="22" viewBox="0 0 27 22"><path d="M1.800 11.300 L9.600 18.600 L25.300 1.800" stroke="#499c54" stroke-width="5.400" fill="none"/></svg>
<svg style="left:2337px;top:58px;" width="24" height="24" viewBox="0 0 24 24"><path d="M2.500 22 L20 4.500" stroke="#499c54" stroke-width="4.400" fill="none"/><path d="M8 0.500 H23.500 V16 Z" fill="#499c54"/></svg>
<svg style="left:2387px;top:55px;" width="30" height="30" viewBox="0 0 30 30"><circle cx="15" cy="15" r="12.400" fill="none" stroke="#afb1b3" stroke-width="3.500"/><path d="M15 7.500 V15.800 L20.300 19.300" stroke="#afb1b3" stroke-width="3.300" fill="none"/></svg>
<svg style="left:2442px;top:56px;" width="27" height="27" viewBox="0 0 27 27"><path d="M11.500 0.500 L0.500 8.300 L11.500 16.100 Z" fill="#5e6062"/><path d="M9 8.300 H16.500 C21.300 8.300 24.500 11.800 24.500 16.400 C24.500 21 21.300 24.500 16.500 24.500 H9" stroke="#5e6062" stroke-width="4" fill="none"/></svg>
<div style="left:2486px;top:50px;width:1.8px;height:40px;background:#555759;"></div>
<svg style="left:2506px;top:56px;" width="29" height="29" viewBox="0 0 29 29"><circle cx="11" cy="11" r="8.700" fill="none" stroke="#afb1b3" stroke-width="4.200"/><path d="M17.300 17.300 L27 27" stroke="#afb1b3" stroke-width="4.600"/></svg>
<svg style="left:2556px;top:54px;" width="32" height="32" viewBox="0 0 32 32"><circle cx="16" cy="16" r="16" fill="#3592c4"/><path d="M16 8.300 L24 16.500 H18.200 V23.800 H13.800 V16.500 H8 Z" fill="#ffffff"/></svg>
<svg style="left:2610px;top:55.5px;" width="29" height="28.5" viewBox="0 0 29 28.5"><defs><linearGradient id="lg1" x1="0" y1="0" x2="1" y2="0.600"><stop offset="0" stop-color="#f4e63a"/><stop offset="0.450" stop-color="#4dd38a"/><stop offset="0.800" stop-color="#21b6a8"/></linearGradient><linearGradient id="lg2" x1="0" y1="0" x2="0" y2="1"><stop offset="0" stop-color="#2aa0e6"/><stop offset="1" stop-color="#1b46b0"/></linearGradient></defs><path d="M1.800 0.800 C8 -1 21 5.500 28.500 13 C22 21.500 10 29.500 3.500 28 C-0.500 20 -0.500 8 1.800 0.800 Z" fill="url(#lg1)"/><path d="M13 3 C19 6 24.500 9.500 28.500 13 C24 19 17 24.500 10.500 27.200 L19 14.500 Z" fill="url(#lg2)"/><path d="M13 3 L19 14.500 L10.500 27.200 C8 27.800 5.500 28.300 3.500 28 C8 22 12 12 13 3 Z" fill="#3fcf8e" opacity="0.550"/></svg>
<svg style="left:2444px;top:168px;" width="24" height="22" viewBox="0 0 24 22"><path d="M12 0.500 L23.700 21.500 H0.300 Z" fill="#c9a01c"/><rect x="10.200" y="7.500" width="3.600" height="7" fill="#2b2b2b"/><rect x="10.200" y="16" width="3.600" height="3.400" fill="#2b2b2b"/></svg>
<span style="left:2473.70px;top:167.40px;font:400 23px/26px 'Liberation Sans', Arial, sans-serif;color:#bbbbbb;letter-spacing:-1.792px;">10</span>
<svg style="left:2514px;top:170px;" width="24" height="24" viewBox="0 0 24 24"><path d="M2.500 9.500 L9 15.500 L21.500 2" stroke="#499c54" stroke-width="4.200" fill="none"/><path d="M0.500 23 L4.500 19.500 L9 23 L13.500 19.500 L18 23 L22 19.500" stroke="#499c54" stroke-width="1.800" fill="none"/></svg>
<span style="left:2543.90px;top:167.40px;font:400 23px/26px 'Liberation Sans', Arial, sans-serif;color:#bbbbbb;letter-spacing:0.000px;">2</span>
<svg style="left:2579.5px;top:174px;" width="17" height="11" viewBox="0 0 17 11"><path d="M1 10 L8.500 2 L16 10" stroke="#afb1b3" stroke-width="2.400" fill="none"/></svg>
<svg style="left:2621.5px;top:175.5px;" width="17" height="11" viewBox="0 0 17 11"><path d="M1 1 L8.500 9 L16 1" stroke="#afb1b3" stroke-width="2.400" fill="none"/></svg>
<div style="left:2626px;top:234px;width:28px;height:4px;background:#c09619;"></div>
<div style="left:2626px;top:290px;width:28px;height:4px;background:#c09619;"></div>
<div style="left:2626px;top:486px;width:28px;height:4px;background:#c09619;"></div>
<div style="left:2626px;top:500px;width:28px;height:4px;background:#c09619;"></div>
<div style="left:2626px;top:516px;width:28px;height:4px;background:#c09619;"></div>
<div style="left:2626px;top:530px;width:28px;height:4px;background:#c09619;"></div>
<div style="left:2626px;top:582px;width:28px;height:4px;background:#c09619;"></div>
<div style="left:2626px;top:809.5px;width:28px;height:4px;background:#c09619;"></div>
<div style="left:2626px;top:853.3px;width:28px;height:4px;background:#c09619;"></div>
<div style="left:2626px;top:867.3px;width:28px;height:4px;background:#c09619;"></div>
<div style="left:2632px;top:466px;width:16px;height:82px;border-radius:8px;background:rgba(150,152,154,0.320)"></div>
<svg style="left:191.5px;top:796px;" width="21" height="29" viewBox="0 0 21 29"><path d="M10.500 0 C16.500 0 21 4.500 21 10 C21 14 18.500 16.500 17 19 L16.500 21 H4.500 L4 19 C2.500 16.500 0 14 0 10 C0 4.500 4.500 0 10.500 0 Z" fill="#f0a732"/><rect x="4.500" y="22.500" width="12" height="2" fill="#c4c6c8"/><rect x="5" y="26" width="11" height="2" fill="#c4c6c8"/></svg>
<svg style="left:49.7px;top:1069.7px;" width="20" height="24.4" viewBox="0 0 20 24.4"><path d="M0 0 L20 12.200 L0 24.400 Z" fill="#499c54"/></svg>
<div style="left:96px;top:1060px;width:44px;height:44px;border-radius:6px;background:#5c6164"></div>
<div style="left:148px;top:1060px;width:44px;height:44px;border-radius:6px;background:#5c6164"></div>
<svg style="left:105px;top:1072px;" width="28" height="23" viewBox="0 0 28 23"><path d="M1.500 11.500 L9.500 19.500 L26 2.500" stroke="#afb1b3" stroke-width="4.600" fill="none"/></svg>
<svg style="left:156px;top:1068px;" width="28" height="28" viewBox="0 0 28 28"><circle cx="14" cy="14" r="11.500" fill="none" stroke="#afb1b3" stroke-width="3.600"/><path d="M5.800 22.200 L22.200 5.800" stroke="#afb1b3" stroke-width="3.600"/></svg>
<div style="left:202px;top:1062px;width:2px;height:40px;background:#555759;"></div>
<div style="left:320px;top:1062px;width:2px;height:40px;background:#555759;"></div>
<div style="left:438px;top:1062px;width:2px;height:40px;background:#555759;"></div>
<svg style="left:222px;top:1069.7px;" width="27" height="25" viewBox="0 0 27 25"><path d="M5.9 0 H10.1 V15.399999999999999 H16 L8.0 24.4 L0 15.399999999999999 H5.9 Z" fill="#afb1b3"/><text x="16.800" y="10.300" font-family="Liberation Sans, Arial, sans-serif" font-weight="700" font-size="16.500" fill="#afb1b3">a</text><text x="17.200" y="24.300" font-family="Liberation Sans, Arial, sans-serif" font-weight="700" font-size="16.500" fill="#afb1b3">z</text></svg>
<svg style="left:274px;top:1069.7px;" width="29" height="25" viewBox="0 0 29 25"><path d="M5.9 0 H10.1 V15.399999999999999 H16 L8.0 24.4 L0 15.399999999999999 H5.9 Z" fill="#afb1b3"/><rect x="14" y="0" width="14" height="4.200" fill="#afb1b3"/><rect x="17.800" y="8" width="10.200" height="4.200" fill="#afb1b3"/><rect x="21.800" y="16" width="6.200" height="4.200" fill="#afb1b3"/></svg>
<svg style="left:341.8px;top:1068px;" width="24.5" height="28.2" viewBox="0 0 24.5 28.2"><rect x="0" y="0" width="24.500" height="4.200" fill="#afb1b3"/><rect x="0" y="24" width="24.500" height="4.200" fill="#afb1b3"/><path d="M5.800 12 L12.250 6 L18.700 12 Z" fill="#afb1b3"/><path d="M5.800 16 L12.250 22 L18.700 16 Z" fill="#afb1b3"/></svg>
<svg style="left:394px;top:1069.7px;" width="24.5" height="24.5" viewBox="0 0 24.5 24.5"><rect x="0" y="10.100" width="24.500" height="4.200" fill="#afb1b3"/><path d="M5.200 0 H19.300 L12.250 7 Z" fill="#afb1b3"/><path d="M5.200 24.500 H19.300 L12.250 17.500 Z" fill="#afb1b3"/></svg>
<svg style="left:462px;top:1069.7px;" width="20" height="24.5" viewBox="0 0 20 24.5"><path d="M10 2.500 V24.500" stroke="#afb1b3" stroke-width="4.200" fill="none"/><path d="M1.500 11 L10 2.500 L18.500 11" stroke="#afb1b3" stroke-width="4.200" fill="none"/></svg>
<svg style="left:514px;top:1069.7px;" width="20" height="24.5" viewBox="0 0 20 24.5"><path d="M10 0 V22" stroke="#afb1b3" stroke-width="4.200" fill="none"/><path d="M1.500 13.500 L10 22 L18.500 13.500" stroke="#afb1b3" stroke-width="4.200" fill="none"/></svg>
<svg style="left:575.5px;top:1076px;" width="15" height="10.5" viewBox="0 0 15 10.5"><path d="M0.800 0.800 L6 5.250 L0.800 9.700 M8.600 0.800 L13.800 5.250 L8.600 9.700" stroke="#9a9da0" stroke-width="1.700" fill="none"/></svg>
<svg style="left:42.8px;top:1120px;" width="31" height="28" viewBox="0 0 31 28"><circle cx="19" cy="12" r="12" fill="#c75450"/><rect x="16.500" y="4" width="4.200" height="8.400" fill="#3c3f41"/><rect x="16.500" y="16" width="4.200" height="3.800" fill="#3c3f41"/><path d="M0.500 8 L15 18 L0.500 28 Z" fill="#499c54" stroke="#3c3f41" stroke-width="1.500" paint-order="stroke"/></svg>
<svg style="left:45.5px;top:1170.5px;" width="25" height="30" viewBox="0 0 25 30"><path d="M20.500 11 C19.500 6.500 16.500 3.800 12.500 3.800 C10 3.800 8 4.800 6.500 6.300" stroke="#afb1b3" stroke-width="3" fill="none"/><path d="M1.500 1.500 L9.500 3 L3.500 9.500 Z" fill="#afb1b3"/><path d="M4.500 19 C5.500 23.500 8.500 26.200 12.500 26.200 C15 26.200 17 25.200 18.500 23.700" stroke="#afb1b3" stroke-width="3" fill="none"/><path d="M23.500 28.500 L15.500 27 L21.500 20.500 Z" fill="#afb1b3"/><rect x="1" y="11.500" width="7" height="7" fill="none" stroke="#afb1b3" stroke-width="2"/><rect x="17" y="11.500" width="7" height="7" fill="none" stroke="#afb1b3" stroke-width="2"/></svg>
<svg style="left:44px;top:1224px;" width="29" height="28" viewBox="0 0 29 28"><path d="M2.500 21 L16 9.500 C15 5.500 17.500 1 22.500 0.500 L24.500 1 L20 6 L21 9 L24 9.500 L28 5 C29 9.500 26 14 21.500 14 L20 13.800 L7 27.500 Z" fill="#afb1b3"/></svg>
<div style="left:38px;top:1270px;width:40px;height:2px;background:#515456;"></div>
<div style="left:48px;top:1294px;width:20px;height:20px;background:#595959;"></div>
<svg style="left:44px;top:1343.5px;" width="28" height="24.5" viewBox="0 0 28 24.5"><path d="M0 4.500 H7.500 L10 0 H18 L20.500 4.500 H28 V24.500 H0 Z" fill="#5a5d5f"/><circle cx="14" cy="14.300" r="5.800" fill="none" stroke="#3c3f41" stroke-width="2.800"/></svg>
<svg style="left:45.5px;top:1394px;" width="29" height="30" viewBox="0 0 29 30"><g fill="#5a5d5f"><path d="M5.500 2 L7.500 0 L12 4.500 L16.500 0 L18.500 2 L14.500 6.500 H9.500 Z"/><path d="M5 7.500 H19 C21 10 21.500 12 21.500 14 H16 L11.500 18.500 V27.500 C7 27 3.500 22.500 3.500 15.500 C3.500 12 4 10 5 7.500 Z"/><rect x="0" y="9.500" width="24" height="3"/><rect x="0" y="16" width="10" height="3"/><rect x="0" y="22" width="10" height="3"/><path d="M16 15.500 H28.500 V28 L24.500 24 L18.500 30 L14.500 26 L20.500 20 Z"/></g></svg>
<svg style="left:44px;top:1446px;" width="28" height="28" viewBox="0 0 28 28"><path d="M5.500 8 V1.500 H26.500 V26.500 H5.500 V20" stroke="#5a5d5f" stroke-width="3.400" fill="none"/><path d="M0 12 H12 V6.500 L20.500 14 L12 21.500 V16 H0 Z" fill="#5a5d5f"/></svg>
<div style="left:38px;top:1492px;width:40px;height:2px;background:#515456;"></div>
<svg style="left:51.5px;top:1512px;" width="15" height="10.5" viewBox="0 0 15 10.5"><path d="M1 1 L6 5.250 L1 9.500 M8.800 1 L13.800 5.250 L8.800 9.500" stroke="#afb1b3" stroke-width="2" fill="none"/></svg>
<svg style="left:2616px;top:1128px;" width="20" height="24.5" viewBox="0 0 20 24.5"><path d="M10 2.500 V24.500" stroke="#afb1b3" stroke-width="4.200" fill="none"/><path d="M1.500 11 L10 2.500 L18.500 11" stroke="#afb1b3" stroke-width="4.200" fill="none"/></svg>
<svg style="left:2616px;top:1180px;" width="20" height="24.5" viewBox="0 0 20 24.5"><path d="M10 0 V22" stroke="#afb1b3" stroke-width="4.200" fill="none"/><path d="M1.500 13.500 L10 22 L18.500 13.500" stroke="#afb1b3" stroke-width="4.200" fill="none"/></svg>
<svg style="left:2613.5px;top:1232px;" width="27" height="27" viewBox="0 0 27 27"><rect x="0" y="0" width="25.500" height="3.600" fill="#afb1b3"/><rect x="0" y="19" width="7" height="3.600" fill="#afb1b3"/><path d="M0 10.800 H19.500 C23 10.800 25 12.800 25 15.800 C25 18.800 23 20.800 19.500 20.800 H15" stroke="#afb1b3" stroke-width="3.600" fill="none"/><path d="M17.500 15 V26.600 L10.500 20.800 Z" fill="#afb1b3"/></svg>
<svg style="left:2613.5px;top:1282px;" width="27" height="24.5" viewBox="0 0 27 24.5"><rect x="0" y="4.500" width="9" height="3.600" fill="#afb1b3"/><rect x="0" y="12.500" width="9" height="3.600" fill="#afb1b3"/><rect x="0" y="20.500" width="26.500" height="3.600" fill="#afb1b3"/><path d="M19 0 V14" stroke="#afb1b3" stroke-width="3.600"/><path d="M12 9.500 H26 L19 17.500 Z" fill="#afb1b3"/></svg>
<svg style="left:2611.5px;top:1336px;" width="29" height="26.5" viewBox="0 0 29 26.5"><rect x="6.500" y="0" width="16" height="5" fill="#afb1b3"/><path d="M2 7.500 H27 C28.500 7.500 29 8.500 29 9.500 V19 H22.500 V14.500 H6.500 V19 H0 V9.500 C0 8.500 0.500 7.500 2 7.500 Z" fill="#afb1b3"/><rect x="7.800" y="16" width="13.400" height="9" fill="none" stroke="#afb1b3" stroke-width="2.600"/><circle cx="24.800" cy="10.800" r="1.300" fill="#3c3f41"/></svg>
<svg style="left:2616px;top:1386px;" width="20.5" height="26" viewBox="0 0 20.5 26"><rect x="6" y="0" width="8.500" height="2.500" fill="#afb1b3"/><rect x="0" y="2.500" width="20.500" height="3.400" fill="#afb1b3"/><path d="M2 8 H18.500 V23.500 C18.500 25 17.500 26 16 26 H4.500 C3 26 2 25 2 23.500 Z" fill="#afb1b3"/></svg>
<svg style="left:2563px;top:1012.5px;" width="26" height="27" viewBox="0 0 26 27"><g transform="translate(13,13.500)"><g fill="#afb1b3"><rect x="-3.400" y="-13.500" width="6.800" height="27"/><rect x="-3.400" y="-13.500" width="6.800" height="27" transform="rotate(60)"/><rect x="-3.400" y="-13.500" width="6.800" height="27" transform="rotate(120)"/><circle r="9.600"/></g><circle r="3.800" fill="#3c3f41"/></g></svg>
<div style="left:2616px;top:1023.7px;width:24px;height:4.3px;background:#afb1b3;"></div>
<svg style="left:607.5px;top:1434px;" width="18" height="18" viewBox="0 0 18 18"><rect x="0.800" y="0.800" width="16.400" height="16.400" fill="none" stroke="#5f6163" stroke-width="1.500"/><path d="M4.500 9 H13.500 M9 4.500 V13.500" stroke="#6a6c6e" stroke-width="1.500"/></svg>
<svg style="left:607.5px;top:1478px;" width="18" height="18" viewBox="0 0 18 18"><rect x="0.800" y="0.800" width="16.400" height="16.400" fill="none" stroke="#5f6163" stroke-width="1.500"/><path d="M4.500 9 H13.500 M9 4.500 V13.500" stroke="#6a6c6e" stroke-width="1.500"/></svg>
<svg style="left:607.5px;top:1522px;" width="18" height="14" viewBox="0 0 18 14"><path d="M0.800 14 V0.800 H17.200 V14" fill="none" stroke="#5f6163" stroke-width="1.500"/><path d="M9 4.500 V14" stroke="#6a6c6e" stroke-width="1.500"/></svg>
<span style="left:-3.80px;top:187.00px;font:400 22px/25px 'Liberation Sans', Arial, sans-serif;color:#bbbbbb;letter-spacing:0.440px;transform-origin:0 0;transform:rotate(-90deg);">Project</span>
<svg style="left:0px;top:199.8px;" width="20" height="18.5" viewBox="0 0 20 18.5"><path d="M-6 0 H7 L10 4.800 H20 V18.400 H-6 Z" fill="#afb1b3"/></svg>
<span style="left:-3.80px;top:340.80px;font:400 22px/25px 'Liberation Sans', Arial, sans-serif;color:#bbbbbb;letter-spacing:0.327px;transform-origin:0 0;transform:rotate(-90deg);">Commit</span>
<svg style="left:0px;top:354px;" width="22" height="17" viewBox="0 0 22 17"><circle cx="9" cy="8.500" r="5.800" fill="none" stroke="#afb1b3" stroke-width="3.600"/><rect x="14.500" y="6.700" width="7.500" height="3.600" fill="#afb1b3"/><rect x="-4" y="6.700" width="7.500" height="3.600" fill="#afb1b3"/></svg>
<span style="left:-3.80px;top:1289.20px;font:400 22px/25px 'Liberation Sans', Arial, sans-serif;color:#bbbbbb;letter-spacing:0.535px;transform-origin:0 0;transform:rotate(-90deg);">Structure</span>
<svg style="left:0px;top:1302px;" width="18" height="18.5" viewBox="0 0 18 18.5"><rect x="0" y="10.800" width="7" height="7.500" fill="#afb1b3"/><rect x="10.300" y="10.800" width="7.700" height="7.500" fill="#afb1b3"/><rect x="10.300" y="0" width="7.700" height="7.500" fill="#afb1b3"/></svg>
<span style="left:-3.80px;top:1477.70px;font:400 22px/25px 'Liberation Sans', Arial, sans-serif;color:#bbbbbb;letter-spacing:0.333px;transform-origin:0 0;transform:rotate(-90deg);">Bookmarks</span>
<svg style="left:0px;top:1488px;" width="18" height="22.2" viewBox="0 0 18 22.2"><path d="M-1 0 H18 V22.200 L8.500 13.500 L-1 22.200 Z" fill="#afb1b3"/></svg>
<svg style="left:50px;top:1547px;" width="18" height="24" viewBox="0 0 18 24"><circle cx="3.600" cy="3.600" r="3.400" fill="#afb1b3"/><circle cx="3.600" cy="20.200" r="3.400" fill="#afb1b3"/><circle cx="14" cy="6.800" r="3.400" fill="#afb1b3"/><path d="M3.600 3.600 V20.200 M14 6.800 C14 13 9 14.500 3.600 15.500" stroke="#afb1b3" stroke-width="2.800" fill="none"/></svg>
<svg style="left:149px;top:1547.5px;" width="24" height="23.5" viewBox="0 0 24 23.5"><circle cx="9.300" cy="9.300" r="7.300" fill="none" stroke="#afb1b3" stroke-width="3.600"/><path d="M14.500 14.500 L22.500 22.500" stroke="#afb1b3" stroke-width="4"/></svg>
<svg style="left:265.5px;top:1549px;" width="17" height="20" viewBox="0 0 17 20"><path d="M0 0 L17 10 L0 20 Z" fill="#afb1b3"/></svg>
<svg style="left:376px;top:1550.5px;" width="20" height="16.5" viewBox="0 0 20 16.5"><rect x="0" y="0" width="3.800" height="3.600" fill="#afb1b3"/><rect x="6" y="0" width="14" height="3.600" fill="#afb1b3"/><rect x="0" y="6.4" width="3.800" height="3.600" fill="#afb1b3"/><rect x="6" y="6.4" width="14" height="3.600" fill="#afb1b3"/><rect x="0" y="12.8" width="3.800" height="3.600" fill="#afb1b3"/><rect x="6" y="12.8" width="14" height="3.600" fill="#afb1b3"/></svg>
<svg style="left:510.5px;top:1547.5px;" width="21" height="21" viewBox="0 0 21 21"><circle cx="10.500" cy="10.500" r="10.400" fill="#afb1b3"/><rect x="8.700" y="4.200" width="3.600" height="7.800" fill="#3c3f41"/><rect x="8.700" y="13.800" width="3.600" height="3.400" fill="#3c3f41"/></svg>
<svg style="left:682.5px;top:1546.5px;" width="21.296" height="24.816" viewBox="0 0 24.2 28.2"><g fill="#afb1b3"><path d="M5 1.4 L6.700 0 L12.100 4.700 L17.500 0 L19.200 1.400 L13.600 6.600 H10.600 Z"/><path d="M12.100 4.600 C17 4.600 19.700 8.500 19.700 13.500 V20 C19.700 25 16.600 28.200 12.100 28.200 C7.600 28.200 4.500 25 4.500 20 V13.500 C4.500 8.500 7.200 4.600 12.100 4.600 Z"/><rect x="0" y="9" width="24.200" height="3.200"/><rect x="0" y="15.600" width="24.200" height="3.100"/><rect x="0" y="21.700" width="24.200" height="3.300"/></g><rect x="8.100" y="12.700" width="8" height="2.600" fill="#3c3f41"/><rect x="8.100" y="18.800" width="8" height="2.600" fill="#3c3f41"/></svg>
<svg style="left:823.5px;top:1548px;" width="23" height="20.5" viewBox="0 0 23 20.5"><rect x="0" y="0" width="23" height="20.500" fill="#afb1b3"/><path d="M4 4.500 L9.500 9.500 L4 14.500" stroke="#3c3f41" stroke-width="2.400" fill="none"/><rect x="11" y="14" width="7.500" height="2.400" fill="#3c3f41"/></svg>
<svg style="left:982.5px;top:1546.5px;" width="26" height="24.3" viewBox="0 0 31 29"><path d="M11.400 0.600 H18.500 V2.100 L13.300 7.100 L30.700 23.200 L25.900 28.700 L9.100 10.600 L4.600 15.800 L0.400 11.600 Z" fill="#afb1b3"/></svg>
<svg style="left:2458px;top:1546px;" width="26.2" height="26.2" viewBox="0 0 26.2 26.2"><path d="M13.100 0 C20.300 0 26.200 5.900 26.200 13.100 V26.200 H13.100 C5.900 26.200 0 20.300 0 13.100 C0 5.900 5.900 0 13.100 0 Z" fill="#499c54"/><text x="13.100" y="19.800" text-anchor="middle" font-family="Liberation Sans, Arial, sans-serif" font-weight="700" font-size="18.5" fill="#ffffff">7</text></svg>
<div style="left:2485.5px;top:1585.5px;width:5px;height:5px;border-radius:50%;background:#afb1b3"></div>
</div>
</body></html>
